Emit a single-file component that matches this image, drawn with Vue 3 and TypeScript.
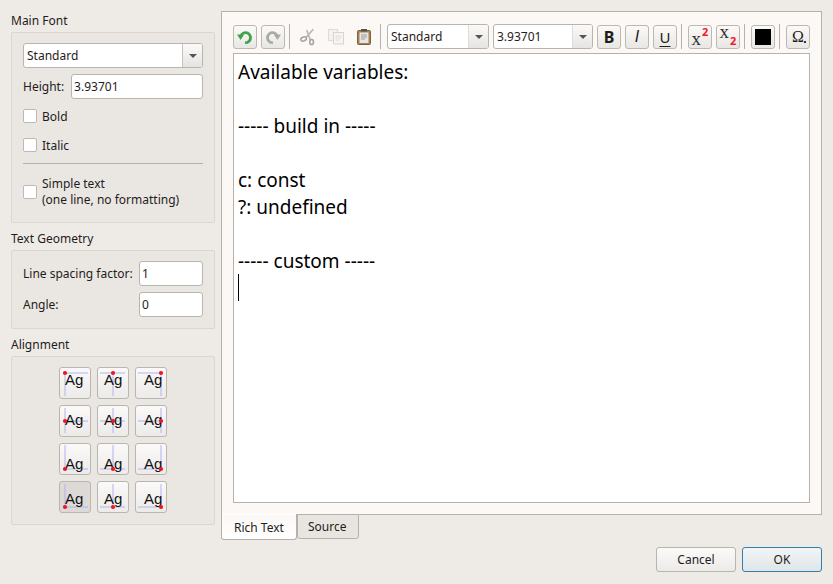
<template>
  <div class="dialog">
    <div class="main">
      <aside class="side">
        <div class="group-title first">Main Font</div>
        <section class="group font-group">
          <div class="combo wide">
            <span class="combo-val">Standard</span>
            <span class="combo-btn"><i class="caret" /></span>
          </div>
          <div class="row height-row">
            <label class="lbl">Height:</label>
            <input class="field grow" value="3.93701" />
          </div>
          <div class="check-row bold-row"><span class="check" /><span>Bold</span></div>
          <div class="check-row italic-row"><span class="check" /><span>Italic</span></div>
          <div class="sep" />
          <div class="check-row simple-row">
            <span class="check" />
            <span class="two-line">Simple text<br />(one line, no formatting)</span>
          </div>
        </section>

        <div class="group-title">Text Geometry</div>
        <section class="group geo-group">
          <div class="row geo-row">
            <label class="lbl geo-lbl">Line spacing factor:</label>
            <input class="field geo-field" value="1" />
          </div>
          <div class="row geo-row second">
            <label class="lbl geo-lbl">Angle:</label>
            <input class="field geo-field" value="0" />
          </div>
        </section>

        <div class="group-title">Alignment</div>
        <section class="group align-group">
          <div class="align-grid">
            <button
              v-for="(a, i) in aligns"
              :key="i"
              type="button"
              class="align-btn"
              :class="{ on: i === 9 }"
            >
              <svg width="30" height="30" viewBox="0 0 30 30">
                <line :x1="a.vx" :y1="a.top" :x2="a.vx" :y2="a.top + 25" class="guide" />
                <line :x1="a.hx" :y1="a.hy" :x2="a.hx + 25" :y2="a.hy" class="guide" />
                <text :x="a.tx" :y="a.ty" class="ag">Ag</text>
                <circle :cx="a.vx" :cy="a.hy" r="2.1" fill="#f5141e" />
              </svg>
            </button>
          </div>
        </section>
      </aside>

      <div class="right">
        <div class="panel">
          <div class="toolbar">
            <button type="button" class="tool">
              <svg width="20" height="20" viewBox="0 0 20 20">
                <path d="M5.5 10.5a5 5 0 1 1 4.6 5.2" fill="none" stroke="#3fa34a" stroke-width="2.8" />
                <path d="M2 7.5 L9 7.8 L5.6 13 Z" fill="#3fa34a" />
              </svg>
            </button>
            <button type="button" class="tool">
              <svg width="20" height="20" viewBox="0 0 20 20">
                <path d="M14.5 10.5a5 5 0 1 0 -4.6 5.2" fill="none" stroke="#a9a9a7" stroke-width="2.8" />
                <path d="M18 7.5 L11 7.8 L14.4 13 Z" fill="#a9a9a7" />
              </svg>
            </button>
            <span class="tb-sep" />
            <span class="plain-icon">
              <svg width="20" height="20" viewBox="0 0 20 20">
                <path d="M15.3 2.3 L8 10.6 M8.7 3 L12.4 13.2" fill="none" stroke="#b4b4b2" stroke-width="1.5" />
                <ellipse cx="5.6" cy="12" rx="2.9" ry="1.9" transform="rotate(-20 5.6 12)" fill="none" stroke="#a3a3a1" stroke-width="1.5" />
                <ellipse cx="13.6" cy="15" rx="1.9" ry="2.6" fill="none" stroke="#a3a3a1" stroke-width="1.5" />
              </svg>
            </span>
            <span class="plain-icon">
              <svg width="20" height="20" viewBox="0 0 20 20">
                <rect x="2.5" y="2.5" width="9" height="11" fill="#f3f2f0" stroke="#dddcda" />
                <rect x="7.5" y="5.5" width="10" height="11.5" fill="#f6f5f3" stroke="#d6d5d3" />
                <path d="M9.5 9h6M9.5 11h6M9.5 13h4" stroke="#dfdedc" />
              </svg>
            </span>
            <span class="plain-icon">
              <svg width="20" height="20" viewBox="0 0 20 20">
                <rect x="3.5" y="3.5" width="13" height="14" rx="1" fill="#a5814f" stroke="#7d6440" />
                <rect x="5.5" y="5.5" width="9" height="10.5" fill="#e6e6e4" />
                <path d="M7 8h6M7 10h6M7 12h4" stroke="#9c9c9a" />
                <rect x="7" y="2" width="6" height="2.5" fill="#55544f" />
              </svg>
            </span>
            <span class="tb-sep" />
            <div class="combo tb-font">
              <span class="combo-val">Standard</span>
              <span class="combo-btn"><i class="caret" /></span>
            </div>
            <div class="combo tb-size">
              <span class="combo-val">3.93701</span>
              <span class="combo-btn"><i class="caret" /></span>
            </div>
            <button type="button" class="tool ch bold">B</button>
            <button type="button" class="tool ch italic">I</button>
            <button type="button" class="tool ch under">U</button>
            <span class="tb-sep" />
            <button type="button" class="tool script sup-btn"><span class="base">x</span><span class="idx">2</span></button>
            <button type="button" class="tool script sub-btn"><span class="base">x</span><span class="idx">2</span></button>
            <span class="tb-sep" />
            <button type="button" class="tool color"><span class="swatch" /></button>
            <span class="tb-sep" />
            <button type="button" class="tool omega">Ω<i class="dot" /></button>
          </div>

          <div class="editor">
            <div v-for="(l, i) in lines" :key="i" class="ed-line">{{ l || '\u00a0' }}</div>
            <span class="cursor" />
          </div>
        </div>

        <div class="tabs">
          <div class="tab active">Rich Text</div>
          <div class="tab">Source</div>
        </div>

        <div class="actions">
          <button type="button" class="btn">Cancel</button>
          <button type="button" class="btn ok">OK</button>
        </div>
      </div>
    </div>
  </div>
</template>

<script setup lang="ts">
interface Align { vx: number; hx: number; hy: number; top: number; tx: number; ty: number }

const lines = [
  'Available variables:',
  '',
  '----- build in -----',
  '',
  'c: const',
  '?: undefined',
  '',
  '----- custom -----',
]

// reference point moves over the glyphs: left/center/right by top/middle/baseline/bottom
const columns = [
  { vx: 5, hx: 3, tx: 5 },
  { vx: 15, hx: 2, tx: 6 },
  { vx: 25, hx: 2, tx: 8 },
]
const rows = [
  { hy: 5, top: 3, ty: 17 },
  { hy: 15, top: 2, ty: 19 },
  { hy: 25, top: 1, ty: 25 },
  { hy: 25, top: 2, ty: 22 },
]

const aligns: Align[] = rows.flatMap(r => columns.map(c => ({ ...c, ...r })))
</script>

<style>
html, body { margin: 0; background: #eeebe7; }
</style>

<style scoped>
.dialog {
  width: 833px;
  height: 584px;
  box-sizing: border-box;
  padding: 11px;
  background: #eeebe7;
  color: #1f1c1b;
  font-family: "Noto Sans", sans-serif;
  font-size: 12px;
  overflow: hidden;
}
.main { display: flex; gap: 6px; height: 100%; }

.side { width: 204px; flex: none; }
.group-title { height: 16px; line-height: 16px; margin: 8px 0 3px; }
.group-title.first { margin-top: 2px; margin-bottom: 3px; }
.group {
  box-sizing: border-box;
  border: 1px solid #dad7d3;
  border-radius: 2px;
  background: #eae7e3;
  padding: 0 11px;
}
.font-group { height: 191px; padding-top: 10px; }
.geo-group { height: 79px; padding-top: 10px; }
.align-group { height: 169px; padding-top: 10px; }

.combo {
  display: flex;
  box-sizing: border-box;
  height: 25px;
  border: 1px solid #b8b5b1;
  border-radius: 3px;
  background: #fff;
  overflow: hidden;
}
.combo-val { flex: 1; padding-left: 3px; line-height: 23px; white-space: nowrap; }
.combo-btn {
  width: 19px;
  display: flex;
  align-items: center;
  justify-content: center;
  border-left: 1px solid #c6c3bf;
  background: linear-gradient(#fbfaf9, #e6e4e1);
}
.caret {
  width: 0;
  height: 0;
  border-left: 4px solid transparent;
  border-right: 4px solid transparent;
  border-top: 4px solid #57534f;
}
.row { display: flex; align-items: center; }
.height-row { margin-top: 6px; gap: 7px; }
.lbl { white-space: nowrap; }
.field {
  box-sizing: border-box;
  height: 25px;
  min-width: 0;
  padding: 0 2px;
  border: 1px solid #b8b5b1;
  border-radius: 3px;
  background: #fff;
  color: inherit;
  font: inherit;
  outline: none;
}
.grow { flex: 1; }
.geo-lbl { flex: 1; }
.geo-field { width: 64px; flex: none; }
.geo-row.second { margin-top: 6px; }

.check-row { display: flex; align-items: center; gap: 5px; }
.check {
  box-sizing: border-box;
  width: 14px;
  height: 14px;
  flex: none;
  border: 1px solid #bcb9b5;
  border-radius: 2px;
  background: #fff;
}
.bold-row { margin-top: 6px; height: 22px; }
.italic-row { margin-top: 7px; height: 22px; }
.sep { height: 1px; background: #b3b0ac; margin-top: 7px; }
.simple-row { margin-top: 12px; }
.two-line { line-height: 16px; }

.align-grid {
  display: grid;
  grid-template-columns: repeat(3, 32px);
  grid-auto-rows: 32px;
  gap: 6px;
  justify-content: center;
}
.align-btn {
  padding: 0;
  display: flex;
  align-items: center;
  justify-content: center;
  border: 1px solid #b9b6b2;
  border-radius: 3px;
  background: linear-gradient(#fbfaf9, #ecebe8);
}
.align-btn.on { background: #dcd9d6; }
.guide { stroke: #b0b2f2; stroke-width: 1; }
.ag { font-family: "Liberation Sans", sans-serif; font-size: 15px; fill: #111; }

.right { flex: 1; min-width: 0; display: flex; flex-direction: column; }
.panel {
  box-sizing: border-box;
  height: 504px;
  flex: none;
  border: 1px solid #b5b2ae;
  background: #fbf8f5;
  padding: 12px 11px 11px;
  display: flex;
  flex-direction: column;
}
.toolbar { display: flex; align-items: center; height: 25px; flex: none; gap: 4px; }
.tool {
  box-sizing: border-box;
  width: 24px;
  height: 24px;
  flex: none;
  padding: 0;
  display: flex;
  align-items: center;
  justify-content: center;
  border: 1px solid #bcb9b5;
  border-radius: 3px;
  background: linear-gradient(#fbfaf9, #e9e7e4);
  color: #1f1c1b;
  font-family: "Noto Sans", sans-serif;
}
.tb-sep { width: 1px; height: 25px; background: #b5b2ae; flex: none; margin-right: 2px; }
.plain-icon { width: 24px; height: 24px; flex: none; display: flex; align-items: center; justify-content: center; }
.tb-font { width: 102px; flex: none; }
.tb-size { width: 100px; flex: none; }
.tb-font .combo-btn, .tb-size .combo-btn { border-left: 1px solid #dedbd8; }
.bold { font-weight: 700; font-size: 16px; }
.italic { font-family: "Liberation Sans", sans-serif; font-style: italic; font-size: 16px; }
.under { font-size: 15px; font-weight: 400; text-decoration: underline; text-decoration-thickness: 1px; text-underline-offset: 3px; }
.script { font-family: "Liberation Serif", serif; gap: 1px; }
.script .base { font-size: 19px; line-height: 16px; color: #333; }
.script .idx { color: #f0202a; font-size: 11px; font-weight: 700; font-family: "Noto Sans", sans-serif; line-height: 11px; }
.sup-btn .base { transform: translateY(2px); }
.sup-btn .idx { transform: translateY(-5px); }
.sub-btn .base { transform: translateY(-5px); }
.sub-btn .idx { transform: translateY(4px); }
.swatch { width: 16px; height: 16px; background: #000; }
.omega { font-family: "Liberation Serif", serif; font-size: 16px; position: relative; }
.dot { position: absolute; right: 3px; bottom: 5px; width: 2px; height: 2px; background: #333; }

.editor {
  box-sizing: border-box;
  flex: none;
  height: 450px;
  margin-top: 4px;
  border: 1px solid #b5b2ae;
  background: #fff;
  padding: 5px 4px;
  font-size: 19px;
  line-height: 27px;
  color: #000;
}
.ed-line { height: 27px; white-space: pre; }
.cursor { display: block; width: 1px; height: 27px; margin-top: -1px; background: #000; }

.tabs { display: flex; align-items: flex-start; flex: none; height: 33px; margin-top: -1px; }
.tab {
  box-sizing: border-box;
  padding: 0 12px 0 10px;
  height: 25px;
  line-height: 23px;
  border: 1px solid #b5b2ae;
  border-radius: 0 0 3px 3px;
  background: #e8e5e1;
}
.tab.active {
  height: 26px;
  line-height: 25px;
  padding: 0 12px;
  background: linear-gradient(#fbf8f5, #fff);
  border-top-color: transparent;
  position: relative;
  z-index: 1;
}
.actions { display: flex; justify-content: flex-end; gap: 6px; }
.btn {
  box-sizing: border-box;
  width: 80px;
  height: 25px;
  padding: 0;
  border: 1px solid #b8b5b1;
  border-radius: 3px;
  background: linear-gradient(#fbfaf9, #ecebe8);
  color: inherit;
  font: inherit;
}
.btn.ok {
  border-color: #2f7fa8;
  background: linear-gradient(#f2f5f6, #dfe5e8);
}
</style>
